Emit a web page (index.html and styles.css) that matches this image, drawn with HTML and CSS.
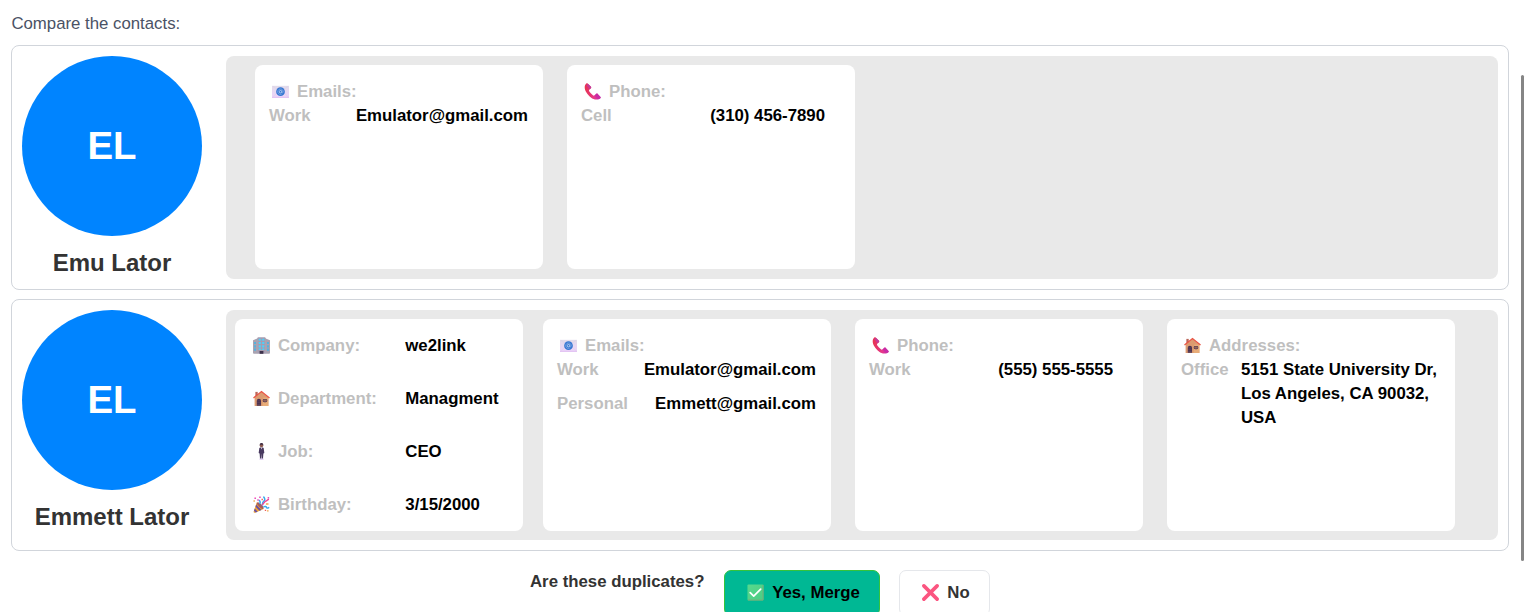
FILE: index.html
```html
<!DOCTYPE html>
<html lang="en">
<head>
<meta charset="utf-8">
<title>Compare contacts</title>
<link rel="stylesheet" href="styles.css">
</head>
<body>
<svg class="defs" aria-hidden="true">
  <defs>
    <linearGradient id="paper" x1="0" y1="0" x2="0" y2="1"><stop offset="0" stop-color="#e2dcea"/><stop offset="1" stop-color="#ecd3fa"/></linearGradient>
    <linearGradient id="handset" x1="0" y1="0" x2="1" y2="0"><stop offset="0" stop-color="#e8334f"/><stop offset=".6" stop-color="#e5388c"/><stop offset="1" stop-color="#c32aa8"/></linearGradient>
    <linearGradient id="tick" x1="0" y1="0" x2="1" y2="1"><stop offset="0" stop-color="#58d98d"/><stop offset="1" stop-color="#4ccc83"/></linearGradient>
  </defs>
  <symbol id="email" viewBox="0 0 18 18"><path d="M0 3h18v12.500H0z" fill="url(#paper)"/><path d="M0 14.700h18v.8H0z" fill="#d9b4ee"/><path d="m1 3.400 8 6 8-6M1 14.500l6-5M17 14.500l-6-5" fill="none" stroke="#d8cbe3" stroke-width=".4"/><circle cx="9" cy="9.200" r="4.600" fill="#3476d2"/><circle cx="9" cy="9.200" r="1.300" fill="none" stroke="#c6d7f4" stroke-width=".9"/><path d="M10.400 7.800v1.700c0 1.500 1.500 1.100 1.500-.3A2.900 2.900 0 1 0 10.300 11.800" fill="none" stroke="#9fbdea" stroke-width=".6"/></symbol>
  <symbol id="phone" viewBox="0 0 18 18"><path d="M2.200.8C.2 2.500.3 6.500 2.600 10c2.700 4.500 6.500 7.300 10.500 7.500 2 .1 3.400-.6 4.300-1.400.5-.5.4-1-.1-1.500l-2.800-3c-.5-.5-1.100-.5-1.600 0l-1.700 1.500c-.5.4-1.200.4-1.700 0C7.700 11.700 6.400 10.200 5.500 8.700c-.4-.6-.3-1.100.1-1.600l1.700-1.600c.5-.5.5-1 .1-1.500L4.100.8C3.500.2 2.800.3 2.200.8Z" fill="url(#handset)"/><path d="m4.200.9 3.200 3.200c.4.5.4.9-.1 1.400L6 6.700 2.700 2.500Z" fill="#c23c99"/><path d="m11.300 13.100 1.600-1.500c.5-.5 1.100-.5 1.600 0l2.900 3.100c.4.500.4.900 0 1.300-.7.600-1.700 1-2.700 1Z" fill="#c92ca5"/></symbol>
  <symbol id="office" viewBox="0 0 18 18"><path d="M0 3.500 4.500 1.500v16.300H.6L0 17zM18 3.500 13.500 1.500v16.300h3.900L18 17z" fill="#a9a3b1"/><path d="M4.300 1.200 5.300.2h7.400l1 1v16.600H4.300z" fill="#a69db0"/><path d="M6 1.800h2.300V4H6zm3.700 0H12V4H9.700zM6 5.200h2.300v2.300H6zm3.700 0H12v2.300H9.700zM6 8.700h2.300V11H6zm3.700 0H12V11H9.700zM6 12.100h2.300v1.700H6zm3.700 0H12v1.700H9.700z" fill="#4fd0fa"/><path d="M1.300 5.200h1.700v2.300H1.300zm0 3.500h1.700V11H1.300zm0 3.500h1.700v2.300H1.300zM15 5.200h1.700v2.300H15zm0 3.500h1.700V11H15zm0 3.500h1.700v2.300H15z" fill="#43b5e8"/><path d="M7 14.800h4v3H7z" fill="#3d324b"/></symbol>
  <symbol id="house" viewBox="0 0 18 18"><path d="M2.500 2H5v5H2.500z" fill="#bb6658"/><path d="M1.700 8 9 1.800 16.300 8v9H1.700z" fill="#dc9b70"/><path d="M11 8h5.300v9H10z" fill="#e8ac78"/><path d="M.5 8.400 9 1.500l8.500 6.900" fill="none" stroke="#e95343" stroke-width="1.300"/><path d="M4 16.800v-5.300a2 2 0 0 1 4.500 0v5.300z" fill="#48304e"/><path d="M4.300 11.500h3.800m-3.800 2h3.800m-3.800 2h3.800" stroke="#76566d" stroke-width=".5"/><rect x="10.300" y="9.500" width="4.800" height="3.400" rx="1.500" fill="#53394f"/><path d="M12.700 9.500V13M10.300 11.300h4.800" stroke="#bd8068" stroke-width=".6"/></symbol>
  <symbol id="suit" viewBox="0 0 18 18"><ellipse cx="9" cy="17" rx="2.500" ry=".9" fill="#dfcdf1"/><path d="M6.700 5.200c1-.8 3.600-.8 4.600 0l.7 5.500-1 .3-.4 5.500H9.300L9 11l-.3 5.500H7.400L7 11l-1-.3z" fill="#493a60"/><circle cx="9" cy="2.700" r="1.900" fill="#8a5a4f"/><path d="M7.100 2.500C7 .3 8 0 9 0s2.100.4 1.900 2.500L10 1.800H8z" fill="#402d42"/><path d="m8.300 4.800.7 2.200.7-2.200z" fill="#eee4ef"/></symbol>
  <symbol id="party" viewBox="0 0 18 18"><path d="m4 6.500 7.300 7.300-9 3.900c-1 .4-2-.5-1.500-1.500z" fill="#efa335"/><path d="m3.300 9 5.700 5.800-2 .9-4.300-4.300zm-1.400 4.300 3 3.300-2 .9-1.900-2z" fill="#6b50a0"/><ellipse cx="7.700" cy="10.200" rx="1.700" ry="4.700" transform="rotate(-45 7.700 10.200)" fill="#a75d5d"/><path d="M7 8.500c1.500-2 .1-3.700-1-4m4 5.500c-.2-3.500 1.300-4.500 2.100-5S12.500 2 11 .7" fill="none" stroke="#36a9ee" stroke-width="1.600"/><path d="M11 11.500c2-1 3-.2 3.500.8s1.800.5 2.500-.4" fill="none" stroke="#36a9ee" stroke-width="1.500"/><path d="M9.500 9.500C11.500 8 12 6 13.500 5.500s2-2 3.500-2" fill="none" stroke="#f14397" stroke-width="1.500"/><path d="M1.500 1.500h1.700v1.600H1.500zM6.500.5h1.700v1.500H6.500zM15.500 1h1.600v1.600h-1.600zM4.500 3.500h1.600V5H4.500z" fill="#ed4fba"/><path d="M.5 4.500H2V6H.5zm13.200 3.200h2.700v1.500h-2.700zM14.800 15h1.700v1.500h-1.700z" fill="#f1a94e"/><path d="M9 3h1.500v1.500H9zM12.500 14.500h1.400V16h-1.400z" fill="#ef5b58"/></symbol>
  <symbol id="check" viewBox="0 0 18 18"><rect x=".5" y=".5" width="17" height="17" rx="1" fill="url(#tick)"/><path d="M17 1v16H1" fill="none" stroke="#7aa978" stroke-width="1"/><path d="m3.400 9.200 3.700 3.600 7.400-7.400" fill="none" stroke="#fff" stroke-width="1.800" stroke-linecap="round" stroke-linejoin="round"/></symbol>
  <symbol id="cross" viewBox="0 0 18 18"><path d="m2 2 14 14M16 2 2 16" stroke="#fb5580" stroke-width="3.800" stroke-linecap="round"/></symbol>
</svg>

<main class="compare">
  <p class="intro">Compare the contacts:</p>

  <section class="contact">
    <div class="profile"><div class="avatar">EL</div><h2 class="name">Emu Lator</h2></div>
    <div class="details details-first">
      <article class="card">
        <h3 class="title"><svg class="icon"><use href="#email"/></svg>Emails:</h3>
        <div class="row"><span class="label">Work</span><span class="value">Emulator@gmail.com</span></div>
      </article>
      <article class="card">
        <h3 class="title"><svg class="icon"><use href="#phone"/></svg>Phone:</h3>
        <div class="row phone-row"><span class="label">Cell</span><span class="value">(310) 456-7890</span></div>
      </article>
    </div>
  </section>

  <section class="contact">
    <div class="profile"><div class="avatar">EL</div><h2 class="name">Emmett Lator</h2></div>
    <div class="details details-second">
      <article class="card facts">
        <div class="fact"><h3 class="title"><svg class="icon"><use href="#office"/></svg>Company:</h3><span class="value">we2link</span></div>
        <div class="fact"><h3 class="title"><svg class="icon"><use href="#house"/></svg>Department:</h3><span class="value">Managment</span></div>
        <div class="fact"><h3 class="title"><svg class="icon"><use href="#suit"/></svg>Job:</h3><span class="value">CEO</span></div>
        <div class="fact"><h3 class="title"><svg class="icon"><use href="#party"/></svg>Birthday:</h3><span class="value">3/15/2000</span></div>
      </article>
      <article class="card">
        <h3 class="title"><svg class="icon"><use href="#email"/></svg>Emails:</h3>
        <div class="row"><span class="label">Work</span><span class="value">Emulator@gmail.com</span></div>
        <div class="row"><span class="label">Personal</span><span class="value">Emmett@gmail.com</span></div>
      </article>
      <article class="card">
        <h3 class="title"><svg class="icon"><use href="#phone"/></svg>Phone:</h3>
        <div class="row phone-row"><span class="label">Work</span><span class="value">(555) 555-5555</span></div>
      </article>
      <article class="card">
        <h3 class="title"><svg class="icon"><use href="#house"/></svg>Addresses:</h3>
        <div class="row address-row"><span class="label">Office</span><span class="value">5151 State University Dr, Los Angeles, CA 90032, USA</span></div>
      </article>
    </div>
  </section>

  <div class="actions">
    <span class="question">Are these duplicates?</span>
    <button class="button merge"><svg class="icon"><use href="#check"/></svg>Yes, Merge</button>
    <button class="button no"><svg class="icon"><use href="#cross"/></svg>No</button>
  </div>
</main>
<div class="scroll-thumb"></div>
</body>
</html>
```
FILE: styles.css
```css
* { box-sizing: border-box; }
body {
  margin: 0;
  height: 612px;
  overflow: hidden;
  background: #fff;
  color: #333;
  font: 16.8px/24px "Liberation Sans", Arial, sans-serif;
}
h2, h3, p { margin: 0; }
.defs { position: absolute; width: 0; height: 0; }
.compare { width: 1520px; padding: 12px 11px 0; }
.intro { height: 33px; padding-left: 0.4px; color: #4a5265; }
.contact {
  display: flex;
  gap: 24px;
  padding: 10px;
  margin-bottom: 9px;
  border: 1px solid #d1d5db;
  border-radius: 8px;
}
.profile { width: 180px; flex: none; text-align: center; }
.avatar {
  display: flex;
  align-items: center;
  justify-content: center;
  width: 180px;
  height: 180px;
  border-radius: 50%;
  background: #0084ff;
  color: #fff;
  font-size: 38.4px;
  font-weight: 700;
}
.name { margin-top: 10px; font-size: 24px; line-height: 33px; }
.details {
  display: flex;
  flex: 1;
  gap: 24px;
  padding: 9px;
  border-radius: 8px;
  background: #e9e9e9;
}
.details-first { height: 223px; padding: 9px 9px 10px 29px; }
.details-second { height: 230px; }
.card {
  flex: none;
  width: 288px;
  padding: 15px 15px 14px 14px;
  border-radius: 8px;
  background: #fff;
}
.title {
  display: flex;
  align-items: center;
  height: 24px;
  padding-left: 2px;
  color: #bfbfbf;
  font-size: 16.8px;
}
.icon { flex: none; width: 17px; height: 17px; margin: -1px 8px 0 1px; }
.row { display: flex; justify-content: space-between; margin-bottom: 10px; font-weight: 700; }
.label { color: #bfbfbf; }
.value { color: #000; font-weight: 700; }
.phone-row { padding-right: 15px; }
.address-row { justify-content: flex-start; gap: 12.4px; }
.address-row .value { width: 202px; }
.facts {
  display: flex;
  flex-direction: column;
  gap: 29px;
  margin-right: -4px;
  padding: 15px 17px 12px;
}
.fact { display: grid; grid-template-columns: 153.3px 1fr; }
.facts .title { padding-left: 0; }
.actions { display: flex; padding: 10px 0 0 519px; }
.question { width: 194px; font-weight: 700; }
.button {
  display: flex;
  align-items: center;
  justify-content: center;
  height: 46px;
  padding: 0 0 0 2px;
  border-radius: 7px;
  font: 700 16.8px/24px "Liberation Sans", Arial, sans-serif;
}
.merge { width: 156px; border: 1px solid #34c43b; background: #00b894; color: #000; }
.no { width: 91px; margin-left: 19px; border: 1px solid #e5e7eb; background: #fff; color: #333; }
.scroll-thumb {
  position: absolute;
  top: 75px;
  left: 1521px;
  width: 3px;
  height: 486px;
  border-radius: 2px;
  background: #858585;
}
```
